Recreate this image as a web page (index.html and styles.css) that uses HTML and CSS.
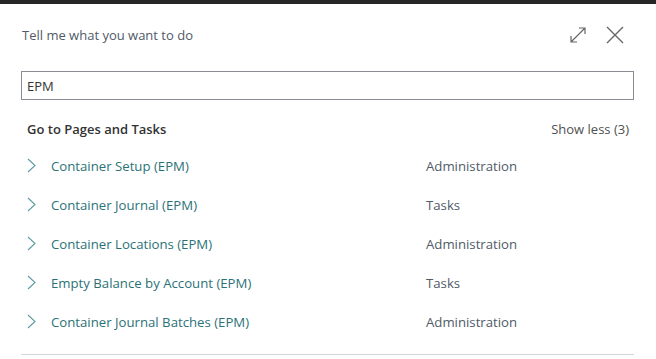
FILE: index.html
```html
<!DOCTYPE html>
<html lang="en">

<head>
    <meta charset="UTF-8">
    <title>Tell me what you want to do</title>
    <link rel="stylesheet" href="styles.css">
</head>

<body>
    <div class="topbar"></div>
    <div class="dialog">
        <div class="dialog-header">
            <span class="dialog-title">Tell me what you want to do</span>
            <div class="dialog-actions">
                <svg class="icon" width="18" height="18" viewBox="0 0 18 18">
                    <path d="M2 16 L16 2 M10 2 H16 V8 M2 10 V16 H8" fill="none" stroke="#666" stroke-width="1.2"/>
                </svg>
                <svg class="icon close" width="18" height="18" viewBox="0 0 18 18">
                    <path d="M1 1 L17 17 M17 1 L1 17" fill="none" stroke="#666" stroke-width="1.4"/>
                </svg>
            </div>
        </div>
        <input type="text" class="search" value="EPM">
        <div class="section-head">
            <span class="section-title">Go to Pages and Tasks</span>
            <a href="#" class="show-less">Show less (3)</a>
        </div>
        <ul class="results">
            <li><svg class="chev" width="9" height="15" viewBox="0 0 9 15"><path d="M1 1 L8 7.5 L1 14" fill="none" stroke="#5c9aa0" stroke-width="1.1"/></svg><a href="#">Container Setup (EPM)</a><span class="cat">Administration</span></li>
            <li><svg class="chev" width="9" height="15" viewBox="0 0 9 15"><path d="M1 1 L8 7.5 L1 14" fill="none" stroke="#5c9aa0" stroke-width="1.1"/></svg><a href="#">Container Journal (EPM)</a><span class="cat">Tasks</span></li>
            <li><svg class="chev" width="9" height="15" viewBox="0 0 9 15"><path d="M1 1 L8 7.5 L1 14" fill="none" stroke="#5c9aa0" stroke-width="1.1"/></svg><a href="#">Container Locations (EPM)</a><span class="cat">Administration</span></li>
            <li><svg class="chev" width="9" height="15" viewBox="0 0 9 15"><path d="M1 1 L8 7.5 L1 14" fill="none" stroke="#5c9aa0" stroke-width="1.1"/></svg><a href="#">Empty Balance by Account (EPM)</a><span class="cat">Tasks</span></li>
            <li><svg class="chev" width="9" height="15" viewBox="0 0 9 15"><path d="M1 1 L8 7.5 L1 14" fill="none" stroke="#5c9aa0" stroke-width="1.1"/></svg><a href="#">Container Journal Batches (EPM)</a><span class="cat">Administration</span></li>
        </ul>
    </div>
</body>

</html>
```

FILE: styles.css
```css
body {
    margin: 0;
    font-family: "Open Sans", "Noto Sans", sans-serif;
    background-color: #fff;
}

.topbar {
    height: 4px;
    background-color: #262626;
}

.dialog {
    padding: 0 22px 0 21px;
}

.dialog-header {
    display: flex;
    justify-content: space-between;
    align-items: center;
    height: 62px;
    padding-left: 1px;
}

.dialog-title {
    font-size: 13px;
    color: #505a68;
}

.dialog-actions {
    display: flex;
    gap: 19px;
    align-items: center;
    padding-right: 10px;
}

.search {
    display: block;
    box-sizing: border-box;
    width: 100%;
    height: 29px;
    margin: 5px 0 0;
    padding: 0 5px;
    border: 1px solid #8a8d93;
    font-family: inherit;
    font-size: 13px;
    color: #333;
    outline: none;
}

.section-head {
    display: flex;
    justify-content: space-between;
    align-items: center;
    height: 34px;
    margin-top: 12px;
    padding: 0 5px 0 6px;
}

.section-title {
    font-size: 13px;
    font-weight: 600;
    color: #333;
}

.show-less {
    font-size: 13px;
    color: #505050;
    text-decoration: none;
}

.results {
    list-style: none;
    margin: 0;
    padding: 0 0 13px;
    border-bottom: 1px solid #d5d5d5;
}

.results li {
    display: flex;
    align-items: center;
    height: 39px;
    font-size: 13.2px;
}

.chev {
    flex: none;
    margin: 0 15px 0 6px;
}

.results a {
    width: 375px;
    color: #2b7277;
    text-decoration: none;
}

.cat {
    color: #505a68;
}
```
